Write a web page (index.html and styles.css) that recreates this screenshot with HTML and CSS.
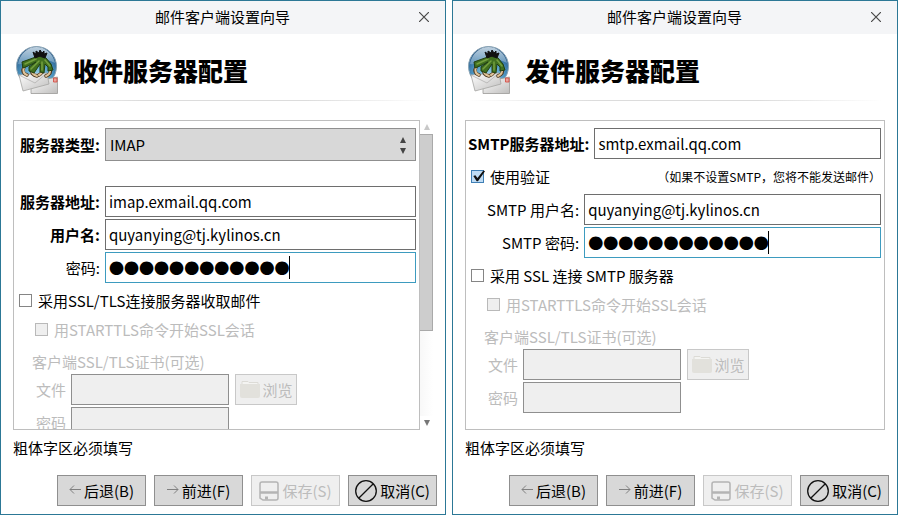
FILE: index.html
```html
<!DOCTYPE html>
<html lang="zh-CN">
<head>
<meta charset="utf-8">
<title>邮件客户端设置向导</title>
<link rel="stylesheet" href="styles.css">
</head>
<body>
<svg class="defs" aria-hidden="true">
  <defs>
    <radialGradient id="globe" cx="0.5" cy="0.75" r="0.75">
      <stop offset="0" stop-color="#a5dcf2"/>
      <stop offset="0.5" stop-color="#4f9ac6"/>
      <stop offset="1" stop-color="#1d4777"/>
    </radialGradient>
    <linearGradient id="shine" x1="0" y1="0" x2="0" y2="1">
      <stop offset="0" stop-color="#e6f1f7"/>
      <stop offset="1" stop-color="#6f9dc0"/>
    </linearGradient>
    <linearGradient id="paper" x1="0" y1="0" x2="1" y2="1">
      <stop offset="0" stop-color="#ffffff"/>
      <stop offset="1" stop-color="#bfbebd"/>
    </linearGradient>
  </defs>
  <symbol id="logo" viewBox="0 0 43 50">
    <circle cx="20.5" cy="21.500" r="20" fill="url(#globe)" stroke="#8ba5b5"/>
    <path d="M2 19C4 8 12 2 20.500 2S37 8 39 18C31 14 24 13 18 15C12 17 7 20 2 19Z" fill="url(#shine)" opacity="0.8"/>
    <path d="M15 37L41.500 32V48.500H15Z" fill="url(#paper)" stroke="#9a9997" stroke-width="0.8"/>
    <path d="M3 30L31 28L33 39L7 46Z" fill="url(#paper)" stroke="#a5a4a2" stroke-width="0.8"/>
    <path d="M3 30L19 38L31 28" fill="none" stroke="#b3b1b0" stroke-width="0.8"/>
    <path d="M37.500 33H41V37H37.500Z" fill="#e9a29a" stroke="#d2443b" stroke-width="0.8"/>
    <g fill="none" stroke-linecap="round">
      <path d="M8 22Q5 28 11 30M16 25Q15 30 21 31M34 24Q36 29 30 31M26 27Q25 29 23 30" stroke="#4c361c" stroke-width="3.500"/>
      <path d="M8 22Q6 28 11 30M16 25Q15 29 21 31M34 24Q35 29 30 31M26 27Q25 29 23 30" stroke="#e0c49a" stroke-width="2"/>
    </g>
    <path d="M22 11L17 13L6 17L7 23L12 21L20 17L13 22L13 26L18 28L24 19V27L28 28L29 19L32 22V26L37 25L35 19L30 13Z" fill="#41701f" stroke="#213f10" stroke-linejoin="round"/>
    <path d="M9 19L20 14M15 24L23 16M26 17V25M29 15L34 21" fill="none" stroke="#74a03f" stroke-width="1.500" stroke-linecap="round"/>
    <path d="M17 7L20 9L20 6L23 8L24 5L26 8L28 6V9L31 8L29 13L24 11L19 13Z" fill="#111" stroke="#111"/>
  </symbol>
  <symbol id="close" viewBox="0 0 10 10">
    <path d="M0 0L10 10M10 0L0 10" fill="none" stroke="#484848" stroke-width="1.2"/>
  </symbol>
  <symbol id="arrow-left" viewBox="0 0 12 12">
    <path d="M12 4.500H1M5 0.500L1 4.500L5 8.500" fill="none" stroke="#808080"/>
  </symbol>
  <symbol id="arrow-right" viewBox="0 0 12 12">
    <path d="M0 4.500H11M7 0.500L11 4.500L7 8.500" fill="none" stroke="#808080"/>
  </symbol>
  <symbol id="save" viewBox="0 0 20 20">
    <path d="M3 1H17Q19 1 19 3V17Q19 19 17 19H4L1 17V3Q1 1 3 1Z" fill="none" stroke="#b4b4b4" stroke-width="1.500"/>
    <path d="M1 11.500H19" stroke="#b4b4b4" stroke-width="2.500"/>
    <path d="M6 15.500H9V18.500H6Z" fill="#b4b4b4"/>
  </symbol>
  <symbol id="cancel" viewBox="0 0 22 22">
    <path d="M11 0.700A10.300 10.300 0 1 0 11 21.300A10.300 10.300 0 1 0 11 0.700ZM18.300 3.700L3.700 18.300" fill="none" stroke="#111" stroke-width="1.300"/>
  </symbol>
  <symbol id="folder" viewBox="0 0 20 17">
    <path d="M2 4V0.500H8L9 1.500H18V4" fill="#f4f4f2" stroke="#dcdbd6"/>
    <path d="M0 3H20V15Q20 17 18 17H2Q0 17 0 15Z" fill="#e2e1dc"/>
  </symbol>
</svg>

<section class="window">
  <header class="titlebar">
    <span class="caption">邮件客户端设置向导</span>
    <button class="close" type="button" aria-label="关闭"><svg><use href="#close"/></svg></button>
  </header>
  <div class="banner">
    <svg class="logo"><use href="#logo"/></svg>
    <h1>收件服务器配置</h1>
  </div>
  <form class="content">
    <div class="scroller">
      <div class="panel">
        <div class="fields fields-in">
          <label class="required" for="in-type">服务器类型:</label>
          <div class="pick">
            <select id="in-type"><option>IMAP</option></select>
            <svg class="spin" viewBox="0 0 6 17"><path d="M3 0L6 6H0ZM3 17L6 11H0Z" fill="#444"/></svg>
          </div>
          <label class="required" for="in-host">服务器地址:</label>
          <input id="in-host" type="text" value="imap.exmail.qq.com">
          <label class="required" for="in-user">用户名:</label>
          <input id="in-user" type="text" value="quyanying@tj.kylinos.cn">
          <label for="in-pass">密码:</label>
          <div class="secret"><input id="in-pass" type="password" value="abcdefghijkl"></div>
        </div>
        <div class="security">
          <label class="check"><input type="checkbox">采用SSL/TLS连接服务器收取邮件</label>
          <label class="check nested"><input type="checkbox" disabled>用STARTTLS命令开始SSL会话</label>
          <p class="group">客户端SSL/TLS证书(可选)</p>
          <div class="cert">
            <label for="in-cert">文件</label>
            <input id="in-cert" type="text" disabled>
            <button class="browse" type="button" disabled><svg><use href="#folder"/></svg>浏览</button>
            <label for="in-certpass">密码</label>
            <input id="in-certpass" type="password" disabled>
          </div>
        </div>
      </div>
      <div class="scrollbar">
        <svg viewBox="0 0 6 6"><path d="M3 0L6 6H0Z" fill="#c8c8c8"/></svg>
        <div class="track"><div class="thumb"></div></div>
        <svg viewBox="0 0 6 6"><path d="M3 6L6 0H0Z" fill="#777"/></svg>
      </div>
    </div>
    <p class="hint">粗体字区必须填写</p>
    <div class="actions">
      <button type="button"><svg class="arrow"><use href="#arrow-left"/></svg>后退(B)</button>
      <button type="button"><svg class="arrow"><use href="#arrow-right"/></svg>前进(F)</button>
      <button type="button" disabled><svg class="disk"><use href="#save"/></svg>保存(S)</button>
      <button type="button"><svg class="stop"><use href="#cancel"/></svg>取消(C)</button>
    </div>
  </form>
</section>

<section class="window">
  <header class="titlebar">
    <span class="caption">邮件客户端设置向导</span>
    <button class="close" type="button" aria-label="关闭"><svg><use href="#close"/></svg></button>
  </header>
  <div class="banner">
    <svg class="logo"><use href="#logo"/></svg>
    <h1>发件服务器配置</h1>
  </div>
  <form class="content">
    <div class="scroller">
      <div class="panel">
        <div class="host">
          <label class="required" for="out-host">SMTP服务器地址:</label>
          <input id="out-host" type="text" value="smtp.exmail.qq.com">
        </div>
        <div class="auth">
          <label class="check"><input type="checkbox" checked>使用验证</label>
          <small>（如果不设置SMTP，您将不能发送邮件）</small>
        </div>
        <div class="fields fields-out">
          <label for="out-user">SMTP 用户名:</label>
          <input id="out-user" type="text" value="quyanying@tj.kylinos.cn">
          <label for="out-pass">SMTP 密码:</label>
          <div class="secret"><input id="out-pass" type="password" value="abcdefghijkl"></div>
        </div>
        <div class="security">
          <label class="check"><input type="checkbox">采用 SSL 连接 SMTP 服务器</label>
          <label class="check nested"><input type="checkbox" disabled>用STARTTLS命令开始SSL会话</label>
          <p class="group">客户端SSL/TLS证书(可选)</p>
          <div class="cert">
            <label for="out-cert">文件</label>
            <input id="out-cert" type="text" disabled>
            <button class="browse" type="button" disabled><svg><use href="#folder"/></svg>浏览</button>
            <label for="out-certpass">密码</label>
            <input id="out-certpass" type="password" disabled>
          </div>
        </div>
      </div>
    </div>
    <p class="hint">粗体字区必须填写</p>
    <div class="actions">
      <button type="button"><svg class="arrow"><use href="#arrow-left"/></svg>后退(B)</button>
      <button type="button"><svg class="arrow"><use href="#arrow-right"/></svg>前进(F)</button>
      <button type="button" disabled><svg class="disk"><use href="#save"/></svg>保存(S)</button>
      <button type="button"><svg class="stop"><use href="#cancel"/></svg>取消(C)</button>
    </div>
  </form>
</section>
</body>
</html>
```
FILE: styles.css
```css
* {
  box-sizing: border-box;
}

body {
  margin: 0;
  height: 100vh;
  display: flex;
  gap: 6px;
  background: #fff;
  color: #000;
  font: 15px/22px "Noto Sans CJK SC", sans-serif;
}

.defs {
  position: absolute;
  width: 0;
  height: 0;
}

svg {
  display: block;
  flex: none;
}

input,
select,
button {
  margin: 0;
  font: inherit;
  color: inherit;
  border-radius: 0;
}

p,
h1 {
  margin: 0;
}

.window {
  flex: 1;
  min-width: 0;
  display: flex;
  flex-direction: column;
  border: 1px solid #2c7896;
  background: #fff;
}

/* Title bar */
.titlebar {
  flex: none;
  display: flex;
  align-items: center;
  height: 33px;
  padding: 0 16px 2px;
  background: #f4f5f7;
}

.caption {
  flex: 1;
  padding-left: 9px;
  text-align: center;
}

.close {
  padding: 0;
  border: 0;
  background: none;
}

.close svg {
  width: 10px;
  height: 10px;
}

/* Banner */
.banner {
  flex: none;
  display: flex;
  align-items: center;
  gap: 14px;
  margin: 11px 15px 19px;
  padding-bottom: 6px;
  background: linear-gradient(90deg, #fff, #dcdcdc 30%, #dcdcdc 70%, #fff) bottom / 100% 1px no-repeat;
}

.logo {
  width: 43px;
  height: 50px;
}

h1 {
  font-size: 25px;
  line-height: 36px;
  font-weight: 900;
}

/* Scrolling form area */
.content {
  flex: 1;
  min-height: 0;
  display: flex;
  flex-direction: column;
  padding: 0 12px 8px;
}

.scroller {
  flex: 1;
  min-height: 0;
  display: flex;
}

.panel {
  flex: 1;
  min-width: 0;
  padding: 7px 3px 0 2px;
  border: 1px solid #bebebe;
  overflow: hidden;
}

.scrollbar {
  flex: none;
  width: 13px;
  display: flex;
  flex-direction: column;
  align-items: center;
  gap: 4px;
  padding: 4px 0;
}

.scrollbar svg {
  width: 6px;
  height: 6px;
}

.track {
  flex: 1;
  align-self: stretch;
  background: linear-gradient(90deg, #f8f8f8, #fff);
}

.thumb {
  height: 70%;
  border: 1px solid #a9a9a9;
  border-left: 0;
  background: #cdcdcd;
}

/* Fields */
input[type="text"],
input[type="password"] {
  width: 100%;
  min-width: 0;
  height: 31px;
  padding: 0 3px;
  border: 1px solid #6e6e6e;
  background: #fff;
  outline: 0;
}

input[type]:disabled {
  border-color: #8f8f8f;
  background: #efefef;
}

.required {
  font-weight: 700;
}

.fields {
  display: grid;
  grid-template-columns: auto 1fr;
  align-items: center;
  gap: 2px 5px;
}

.fields > label {
  text-align: right;
}

.fields-in {
  padding-left: 4px;
  grid-template-rows: 56px;
}

.fields-in > .required:first-child,
.pick {
  align-self: start;
}

.fields-in > .required:first-child {
  line-height: 33px;
}

.fields-out {
  padding-left: 19px;
}

.pick,
.secret {
  position: relative;
}

.pick select {
  display: block;
  width: 100%;
  height: 33px;
  padding: 0 4px;
  border: 1px solid #8f8f8f;
  background: #d8d8d8;
  appearance: none;
}

.spin {
  position: absolute;
  right: 10px;
  top: 9px;
  width: 6px;
  height: 17px;
  pointer-events: none;
}

.secret input {
  display: block;
  border-color: #3d9bbf;
  font: 43px/29px "Liberation Sans", sans-serif;
  -webkit-text-stroke: 2px #000;
}

.secret::after {
  content: "";
  position: absolute;
  left: 184px;
  top: 4px;
  width: 1px;
  height: 23px;
  background: #000;
}

.host {
  display: flex;
  align-items: center;
  gap: 5px;
}

.host label {
  flex: none;
}

.auth {
  display: flex;
  align-items: center;
  justify-content: space-between;
  height: 35px;
}

small {
  font-size: 12px;
}

/* Check boxes */
.check {
  display: flex;
  align-items: center;
  gap: 6px;
  padding-left: 3px;
  line-height: 29px;
}

.check input {
  flex: none;
  width: 13px;
  height: 13px;
  border: 1px solid #858585;
  background: #fff;
  appearance: none;
}

.check input:checked {
  position: relative;
  border-color: #3f7fb5;
  background: #bfdcf5;
}

.check input:checked::after {
  content: "";
  position: absolute;
  inset: -1px -2px 0 0;
  background: #111;
  clip-path: polygon(10% 50%, 26% 44%, 42% 66%, 88% 4%, 100% 10%, 46% 94%, 36% 94%);
}

.check input:disabled {
  border-color: #b9b9b9;
}

/* Security options */
.security {
  padding: 3px 0 0;
}

.nested {
  padding-left: 19px;
  color: #bcbcbc;
}

.group {
  margin: 7px 0 1px;
  padding-left: 16px;
  color: #bcbcbc;
}

.cert {
  display: grid;
  grid-template-columns: auto 158px auto;
  justify-content: start;
  align-items: center;
  gap: 2px 5px;
  padding-left: 20px;
  color: #bcbcbc;
}

/* Buttons */
.browse,
.actions button {
  display: flex;
  align-items: center;
  justify-content: center;
  gap: 3px;
  height: 31px;
  padding: 0;
  border: 1px solid #8f8f8f;
  background: #d8d8d8;
  white-space: nowrap;
}

.browse {
  width: 62px;
  margin-left: 1px;
}

.browse:disabled,
.actions button:disabled {
  border-color: #c8c8c8;
  background: #efefef;
  color: #bcbcbc;
}

.browse svg {
  width: 20px;
  height: 17px;
}

.hint {
  flex: none;
  padding: 7px 0 16px;
}

.actions {
  flex: none;
  display: flex;
  justify-content: flex-end;
  gap: 8px;
  margin-right: -4px;
}

.actions button {
  width: 89px;
}

.arrow {
  width: 12px;
  height: 12px;
}

.disk {
  width: 20px;
  height: 20px;
}

.stop {
  width: 22px;
  height: 22px;
}
```
